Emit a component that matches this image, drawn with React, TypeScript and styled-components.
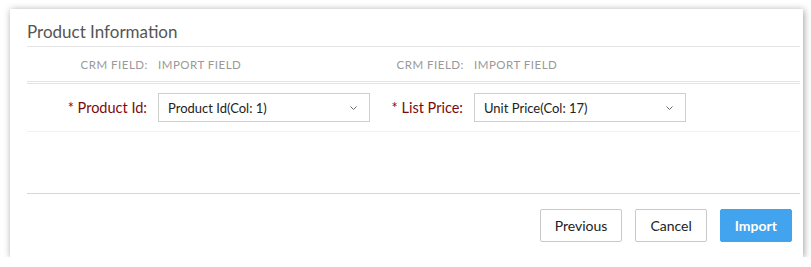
import styled, { createGlobalStyle } from 'styled-components';

const GlobalStyle = createGlobalStyle`
  body {
    margin: 0;
    background: #fff;
    font-family: Lato, "Liberation Sans", sans-serif;
  }
`;

const Card = styled.div`
  box-sizing: border-box;
  width: 793px;
  height: 248px;
  margin: 9px 0 0 10px;
  background: #fff;
  box-shadow: 1px 1px 7px rgba(0, 0, 0, 0.38);
  padding: 0 3px 0 17px;
  display: flex;
  flex-direction: column;
`;

const Title = styled.h2`
  margin: 0;
  height: 38px;
  box-sizing: border-box;
  padding-top: 12px;
  font-size: 17px;
  font-weight: 400;
  color: #555;
  border-bottom: 1px solid #e3e3e3;
`;

const Grid = styled.div`
  display: grid;
  grid-template-columns: 131px 212px 104px 212px;
  align-items: center;
`;

const HeaderRow = styled(Grid)`
  height: 34px;
  border-bottom: 1px solid #e3e3e3;
  font-size: 11.5px;
  color: #999;
  letter-spacing: 0.5px;
`;

const HeaderCell = styled.span<{ $right?: boolean }>`
  text-align: ${(p) => (p.$right ? 'right' : 'left')};
  padding-right: ${(p) => (p.$right ? '10px' : '0')};
`;

const FieldRow = styled(Grid)`
  height: 47px;
  margin-top: 1px;
  border-top: 1px solid #e3e3e3;
  border-bottom: 1px solid #f1f1f1;
`;

const Label = styled.label`
  text-align: right;
  padding-right: 11px;
  font-size: 14.5px;
  color: #7d0a0a;
`;

const Select = styled.div`
  box-sizing: border-box;
  height: 29px;
  border: 1px solid #cfcfcf;
  padding: 0 12px 0 9px;
  display: flex;
  align-items: center;
  justify-content: space-between;
  font-size: 13px;
  color: #222;
`;

const Spacer = styled.div`
  flex: 1;
  border-bottom: 1px solid #d6d6d6;
`;

const Footer = styled.div`
  display: flex;
  justify-content: flex-end;
  gap: 13px;
  padding: 15px 8px 0 0;
  height: 48px;
`;

const Button = styled.button<{ $primary?: boolean }>`
  box-sizing: border-box;
  height: 33px;
  padding: 0 14px;
  border-radius: 2px;
  font-family: inherit;
  font-size: 14px;
  border: 1px solid ${(p) => (p.$primary ? '#42a3ef' : '#c9c9c9')};
  background: ${(p) => (p.$primary ? '#42a3ef' : '#fff')};
  color: ${(p) => (p.$primary ? '#fff' : '#222')};
  font-weight: ${(p) => (p.$primary ? 700 : 400)};
`;

const Chevron = () => (
  <svg width="7" height="4" viewBox="0 0 7 4">
    <path d="M0.5 0.5 L3.5 3.5 L6.5 0.5" fill="none" stroke="#666" strokeWidth="1" />
  </svg>
);

export default function App() {
  return (
    <>
      <GlobalStyle />
      <Card>
        <Title>Product Information</Title>
        <HeaderRow>
          <HeaderCell $right>CRM FIELD:</HeaderCell>
          <HeaderCell>IMPORT FIELD</HeaderCell>
          <HeaderCell $right>CRM FIELD:</HeaderCell>
          <HeaderCell>IMPORT FIELD</HeaderCell>
        </HeaderRow>
        <FieldRow>
          <Label>* Product Id:</Label>
          <Select>
            Product Id(Col: 1)
            <Chevron />
          </Select>
          <Label>* List Price:</Label>
          <Select>
            Unit Price(Col: 17)
            <Chevron />
          </Select>
        </FieldRow>
        <Spacer />
        <Footer>
          <Button>Previous</Button>
          <Button>Cancel</Button>
          <Button $primary>Import</Button>
        </Footer>
      </Card>
    </>
  );
}
